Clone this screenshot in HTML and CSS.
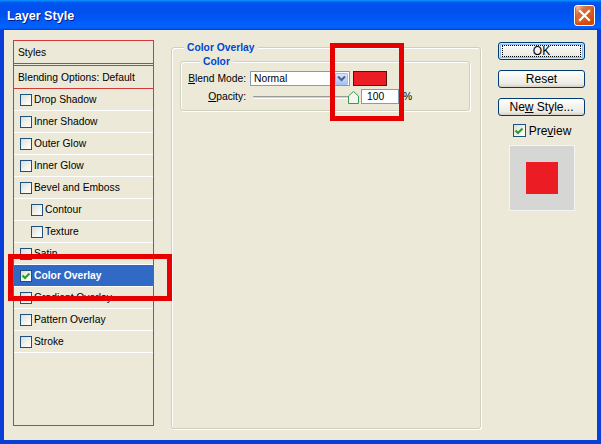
FILE: index.html
```html
<!DOCTYPE html>
<html>
<head>
<meta charset="utf-8">
<title>Layer Style</title>
<link rel="stylesheet" href="styles.css">
</head>
<body>
<div class="window">
  <div class="titlebar">
    <span class="title">Layer Style</span>
    <span class="close">
      <svg width="13" height="13" viewBox="0 0 13 13"><path d="M2 2 L11 11 M11 2 L2 11" stroke="#fff" stroke-width="2.2" stroke-linecap="square"/></svg>
    </span>
  </div>
  <div class="frame">
    <div class="content">
      <div class="sidebar">
        <div class="row head">Styles</div>
        <div class="row head blend">Blending Options: Default</div>
        <div class="row"><span class="cb"></span>Drop Shadow</div>
        <div class="row"><span class="cb"></span>Inner Shadow</div>
        <div class="row"><span class="cb"></span>Outer Glow</div>
        <div class="row"><span class="cb"></span>Inner Glow</div>
        <div class="row"><span class="cb"></span>Bevel and Emboss</div>
        <div class="row sub"><span class="cb"></span>Contour</div>
        <div class="row sub"><span class="cb"></span>Texture</div>
        <div class="row"><span class="cb"></span>Satin</div>
        <div class="row sel"><span class="cb"><svg width="10" height="10" viewBox="0 0 10 10"><path d="M1.5 4.5 L4 7 L8.5 2.5" fill="none" stroke="#21A121" stroke-width="2"/></svg></span>Color Overlay</div>
        <div class="row"><span class="cb"></span>Gradient Overlay</div>
        <div class="row"><span class="cb"></span>Pattern Overlay</div>
        <div class="row"><span class="cb"></span>Stroke</div>
      </div>

      <fieldset class="group outer">
        <legend>Color Overlay</legend>
        <fieldset class="group inner">
          <legend>Color</legend>
          <div class="form">
            <span class="lbl"><u>B</u>lend Mode:</span>
            <div class="ctrl">
              <div class="combo">
                <span class="combo-text">Normal</span>
                <span class="drop"><svg width="9" height="7" viewBox="0 0 9 7"><path d="M1 1.5 L4.5 5 L8 1.5" fill="none" stroke="#4D6185" stroke-width="2"/></svg></span>
              </div>
              <span class="swatch"></span>
            </div>
            <span class="lbl"><u>O</u>pacity:</span>
            <div class="ctrl">
              <div class="slider">
                <span class="track"></span>
                <svg class="thumb" width="11" height="13" viewBox="0 0 11 13"><path d="M0.5 5 L5.5 0.5 L10.5 5 L10.5 12.5 L0.5 12.5 Z" fill="#F4F4F0" stroke="#3C9A50" stroke-width="1"/></svg>
              </div>
              <span class="num">100</span>
              <span class="pct">%</span>
            </div>
          </div>
        </fieldset>
      </fieldset>

      <div class="actions">
        <div class="btn default"><span class="focus">OK</span></div>
        <div class="btn"><span>Reset</span></div>
        <div class="btn"><span>Ne<u>w</u> Style...</span></div>
        <div class="preview-check"><span class="cb"><svg width="10" height="10" viewBox="0 0 10 10"><path d="M1.5 4.5 L4 7 L8.5 2.5" fill="none" stroke="#21A121" stroke-width="2"/></svg></span><span>Pre<u>v</u>iew</span></div>
        <div class="preview"><div class="preview-swatch"></div></div>
      </div>

      <div class="mark mark-list"></div>
      <div class="mark mark-color"></div>
    </div>
  </div>
</div>
</body>
</html>
```

FILE: styles.css
```css
* { box-sizing: border-box; }

html, body {
  margin: 0;
  padding: 0;
  background: #ECE9D8;
}

body {
  font-family: "Liberation Sans", Arial, sans-serif;
  font-size: 10.3px;
  color: #000;
}

.window {
  width: 601px;
  height: 444px;
  display: flex;
  flex-direction: column;
}

/* title bar */
.titlebar {
  height: 30px;
  flex: none;
  display: flex;
  align-items: center;
  justify-content: space-between;
  padding: 0 6px 0 7px;
  background: linear-gradient(180deg, #0997FF 0%, #0053EE 9%, #0050EE 40%, #0060FC 85%, #0062FF 92%, #0052F0 96%, #003DD7 100%);
}

.title {
  color: #fff;
  font-weight: bold;
  font-size: 12.6px;
  text-shadow: 1px 1px 0 #0A1A8A;
  padding-top: 1px;
}

.close {
  width: 21px;
  height: 21px;
  border: 1px solid #fff;
  border-radius: 3px;
  display: flex;
  align-items: center;
  justify-content: center;
  background: radial-gradient(circle at 90% 90%, #CC4600 0%, #DC6527 55%, #CD7546 70%, #FFCCB2 90%, #fff 100%);
  box-shadow: inset 0 -1px 2px 1px #DA4600;
}

/* frame */
.frame {
  flex: 1;
  border-left: 4px solid #0A3FD7;
  border-right: 4px solid #0A3FD7;
  border-bottom: 4px solid #0A3FD7;
  box-shadow: inset 1px 0 0 #166AEE, inset -1px -1px 0 #166AEE;
  display: flex;
}

.content {
  position: relative;
  flex: 1;
  background: #ECE9D8;
  display: flex;
  align-items: flex-start;
  padding: 11px 0 0 9px;
}

/* style list */
.sidebar {
  width: 141px;
  height: 386px;
  margin-top: -1px;
  flex: none;
  border: 1px solid #D23A36;
}

.row {
  height: 22px;
  display: flex;
  align-items: center;
  padding-left: 6px;
  border-bottom: 1px solid #FFFFFF;
  white-space: nowrap;
}

.row.head {
  height: 23px;
  padding-left: 4px;
  border-bottom: 1px solid #D23A36;
}

.row.head.blend {
  height: 24px;
  margin-top: 1px;
  border-top: 1px solid #D23A36;
}

.row.sub {
  padding-left: 17px;
}

.row.sel {
  background: #316AC5;
  color: #fff;
  font-weight: bold;
}

.cb {
  width: 12px;
  height: 12px;
  flex: none;
  margin-right: 2px;
  border: 1px solid #1C5180;
  background: linear-gradient(135deg, #DCDCD7 0%, #F4F4F0 60%, #FFFFFF 100%);
  display: flex;
  align-items: center;
  justify-content: center;
}

.cb svg { display: block; }

/* group boxes */
.group {
  margin: 0;
  padding: 0;
  min-width: 0;
  border: 1px solid #D0D0BF;
  border-radius: 3px;
  box-shadow: inset 1px 1px 0 #fff, 1px 1px 0 #fff;
}

.group legend {
  font-weight: bold;
  color: #0046D5;
  line-height: 13px;
  padding: 0 3px;
  background: #ECE9D8;
}

.outer {
  width: 310px;
  height: 388px;
  margin-left: 17px;
  flex: none;
}

.outer > legend { margin-left: 12px; }

.inner {
  width: 290px;
  margin: 1px 0 0 8px;
  padding: 3px 0 6px 7px;
}

.inner > legend { margin-left: 12px; }

.form {
  display: grid;
  grid-template-columns: 58px auto;
  column-gap: 4px;
  row-gap: 3px;
  align-items: center;
}

.lbl {
  text-align: right;
  white-space: nowrap;
}

.ctrl {
  display: flex;
  align-items: center;
  height: 15px;
}

.combo {
  width: 100px;
  height: 15px;
  border: 1px solid #7F9DB9;
  background: #fff;
  display: flex;
  align-items: center;
  justify-content: space-between;
  padding: 0 1px 0 3px;
}

.drop {
  width: 13px;
  height: 12px;
  border: 1px solid #A9BFEF;
  border-radius: 1px;
  background: linear-gradient(180deg, #D6E2FD 0%, #BDD0FA 60%, #A8C0F4 100%);
  display: flex;
  align-items: center;
  justify-content: center;
}

.swatch {
  width: 34px;
  height: 15px;
  margin-left: 3px;
  border: 1px solid #5A1010;
  background: #EC1C24;
}

.slider {
  position: relative;
  width: 108px;
  height: 15px;
  flex: none;
}

.track {
  position: absolute;
  left: 3px;
  top: 7px;
  width: 100px;
  height: 3px;
  border-top: 1px solid #9D9A8E;
  border-bottom: 1px solid #fff;
  background: #D8D5C8;
  border-radius: 1px;
}

.thumb {
  position: absolute;
  left: 98px;
  top: 2px;
}

.num {
  width: 38px;
  height: 15px;
  margin-left: 3px;
  border: 1px solid #7F9DB9;
  background: #fff;
  padding-left: 5px;
  line-height: 13px;
}

.pct { margin-left: 4px; }

/* buttons column */
.actions {
  width: 87px;
  margin-left: 17px;
  margin-top: 1px;
  flex: none;
  display: flex;
  flex-direction: column;
  align-items: center;
  font-size: 12px;
}

.btn {
  width: 87px;
  height: 18px;
  margin-bottom: 10px;
  border: 1px solid #003C74;
  border-radius: 3px;
  background: linear-gradient(180deg, #FFFFFF 0%, #F4F3EE 45%, #ECEBE6 80%, #D6D0C5 100%);
  display: flex;
  align-items: center;
  justify-content: center;
  white-space: nowrap;
}

.btn.default {
  box-shadow: inset 0 0 0 1px #CEE7FF, inset 0 0 0 2px #98B8EA;
}

.btn .focus {
  width: 79px;
  height: 12px;
  border: 1px dotted #000;
  display: flex;
  align-items: center;
  justify-content: center;
}

.preview-check {
  margin-top: -2px;
  height: 13px;
  display: flex;
  align-items: center;
  padding-left: 1px;
}

.preview-check .cb {
  width: 13px;
  height: 13px;
  margin-right: 3px;
}

.preview {
  width: 66px;
  height: 66px;
  margin-top: 8px;
  background: #D6D6D4;
  border: 1px solid #F4F4F2;
  display: flex;
  align-items: center;
  justify-content: center;
}

.preview-swatch {
  width: 32px;
  height: 32px;
  background: #EC1C24;
}

/* red annotation frames */
.mark {
  position: absolute;
  border: 5px solid #E60000;
}

.mark-list {
  left: 4px;
  top: 224px;
  width: 164px;
  height: 47px;
}

.mark-color {
  left: 326px;
  top: 13px;
  width: 74px;
  height: 78px;
}
```
